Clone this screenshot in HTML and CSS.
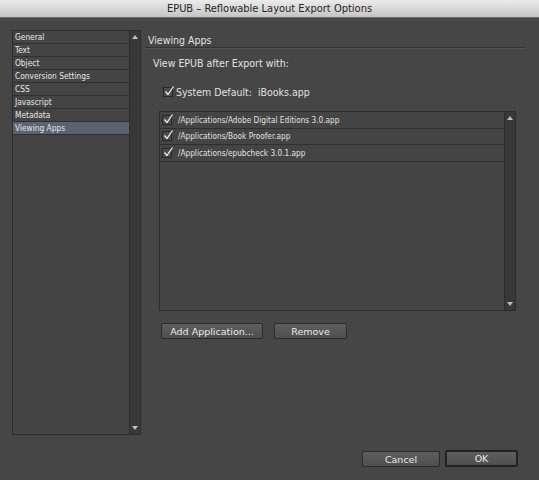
FILE: index.html
```html
<!DOCTYPE html>
<html lang="en">
  <head>
    <meta charset="UTF-8" />
    <title>EPUB - Reflowable Layout Export Options</title>
    <link rel="stylesheet" href="styles.css">
  </head>
  <body>
    <div class="window">
      <div class="titlebar">EPUB – Reflowable Layout Export Options</div>

      <div class="content">
        <div class="sidebar">
          <ul class="nav">
            <li>General</li>
            <li>Text</li>
            <li>Object</li>
            <li>Conversion Settings</li>
            <li>CSS</li>
            <li>Javascript</li>
            <li>Metadata</li>
            <li class="selected">Viewing Apps</li>
          </ul>
          <div class="scrollbar">
            <span class="arrow up"></span>
            <span class="arrow down"></span>
          </div>
        </div>

        <div class="panel">
          <div class="section-title">Viewing Apps</div>
          <div class="label">View EPUB after Export with:</div>

          <label class="check-row system">
            <span class="checkbox"><svg viewBox="0 0 12 12"><path d="M2.5 6.5 L5 9.5 L10.5 1.5" /></svg></span>
            System Default:&nbsp; iBooks.app
          </label>

          <div class="app-list">
            <ul class="apps">
              <li><span class="checkbox"><svg viewBox="0 0 12 12"><path d="M2.5 6.5 L5 9.5 L10.5 1.5" /></svg></span>/Applications/Adobe Digital Editions 3.0.app</li>
              <li><span class="checkbox"><svg viewBox="0 0 12 12"><path d="M2.5 6.5 L5 9.5 L10.5 1.5" /></svg></span>/Applications/Book Proofer.app</li>
              <li><span class="checkbox"><svg viewBox="0 0 12 12"><path d="M2.5 6.5 L5 9.5 L10.5 1.5" /></svg></span>/Applications/epubcheck 3.0.1.app</li>
            </ul>
            <div class="scrollbar">
              <span class="arrow up"></span>
              <span class="arrow down"></span>
            </div>
          </div>

          <div class="button-row">
            <button class="btn add-btn">Add Application...</button>
            <button class="btn remove-btn">Remove</button>
          </div>
        </div>
      </div>

      <div class="footer">
        <button class="btn cancel-btn">Cancel</button>
        <button class="btn ok-btn">OK</button>
      </div>
    </div>
  </body>
</html>
```

FILE: styles.css
```css
* {
  margin: 0;
  padding: 0;
  box-sizing: border-box;
}

body {
  font-family: "DejaVu Sans Condensed", "DejaVu Sans", sans-serif;
  background-color: #464646;
  color: #e2e2e2;
}

.window {
  width: 539px;
  height: 480px;
  display: flex;
  flex-direction: column;
}

.titlebar {
  height: 18px;
  line-height: 17px;
  text-align: center;
  font-size: 11px;
  color: #262626;
  background: linear-gradient(#ebebeb, #c4c4c4);
  border-bottom: 1px solid #6a6a6a;
}

.content {
  display: flex;
  padding: 12px 0 0 12px;
  height: 422px;
}

/* left list */
.sidebar {
  width: 129px;
  height: 405px;
  display: flex;
  border: 1px solid #2c2c2c;
  background: #444444;
}

.nav {
  list-style: none;
  flex: 1;
}

.nav li {
  height: 13px;
  line-height: 12px;
  font-size: 8.3px;
  padding-left: 2px;
  border-bottom: 1px solid #2f2f2f;
  color: #e6e6e6;
}

.nav li.selected {
  background: #5b6371;
}

.scrollbar {
  width: 11px;
  background: #383838;
  border-left: 1px solid #2c2c2c;
  display: flex;
  flex-direction: column;
  justify-content: space-between;
  align-items: center;
  padding: 4px 0;
}

.arrow {
  width: 0;
  height: 0;
  border-left: 3px solid transparent;
  border-right: 3px solid transparent;
}

.arrow.up {
  border-bottom: 4px solid #bdbdbd;
}

.arrow.down {
  border-top: 4px solid #bdbdbd;
}

/* right panel */
.panel {
  flex: 1;
  padding-left: 4px;
}

.section-title {
  font-size: 10.5px;
  padding: 4px 0 1px 3px;
  border-bottom: 1px solid #333333;
  box-shadow: 0 1px 0 #555555;
  margin-right: 14px;
}

.label {
  font-size: 10.5px;
  margin: 9px 0 0 8px;
}

.check-row {
  display: flex;
  align-items: center;
  font-size: 10.5px;
}

.system {
  margin: 17px 0 0 18px;
}

.checkbox {
  position: relative;
  width: 10px;
  height: 10px;
  margin-right: 3px;
  background: #4c4c4c;
  border: 1px solid #262626;
  flex-shrink: 0;
}

/* check mark pokes out over the box edge */
.checkbox svg {
  position: absolute;
  left: -1px;
  top: -3px;
  width: 12px;
  height: 12px;
}

.checkbox path {
  fill: none;
  stroke: #f2f2f2;
  stroke-width: 1.3;
}

.app-list {
  margin: 13px 0 0 14px;
  width: 357px;
  height: 200px;
  border: 1px solid #2c2c2c;
  background: #444444;
  display: flex;
}

.apps {
  list-style: none;
  flex: 1;
}

.apps li {
  height: 16.5px;
  display: flex;
  align-items: center;
  font-size: 8.2px;
  padding-left: 2px;
  border-bottom: 1px solid #2f2f2f;
}

.apps .checkbox {
  margin-right: 6px;
}

.button-row {
  margin: 12px 0 0 16px;
  display: flex;
  gap: 11px;
}

.btn {
  font-family: "DejaVu Sans", sans-serif;
  font-size: 9.5px;
  height: 16px;
  color: #e8e8e8;
  background: linear-gradient(#5e5e5e, #4f4f4f);
  border: 1px solid #2b2b2b;
  border-radius: 2px;
}

.add-btn {
  width: 102px;
}

.remove-btn {
  width: 73px;
}

.footer {
  display: flex;
  justify-content: flex-end;
  gap: 5px;
  padding: 11px 21px 0 0;
}

.cancel-btn {
  width: 78px;
}

.ok-btn {
  width: 73px;
  height: 17px;
  border: 2px solid #222222;
  margin-top: -1px;
}
```
